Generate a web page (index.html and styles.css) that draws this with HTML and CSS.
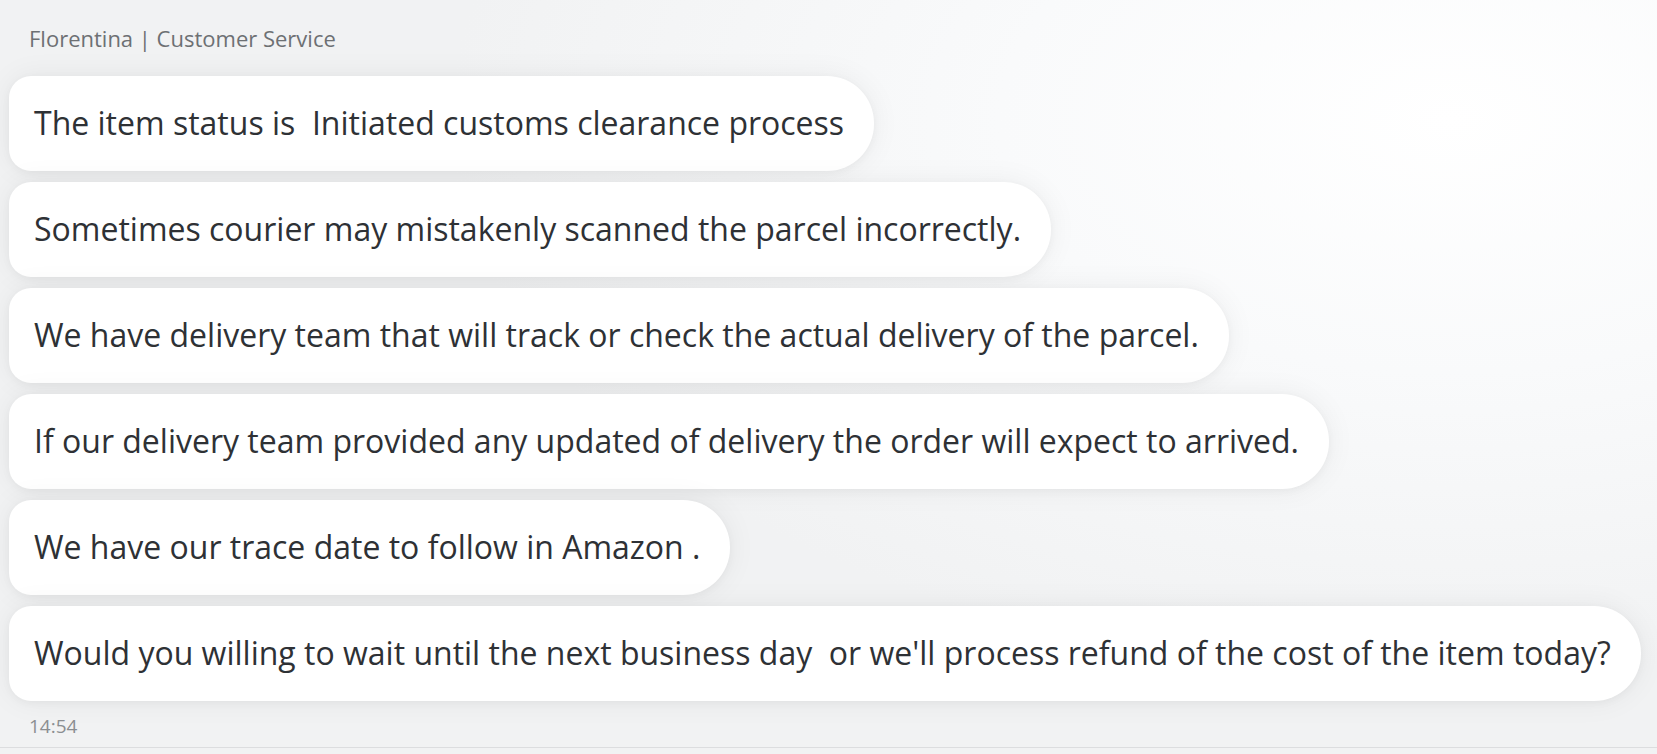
FILE: index.html
```html
<!DOCTYPE html>
<html>
<head>
<meta charset="utf-8">
<link rel="stylesheet" href="styles.css">
</head>
<body>
<div class="chat">
  <div class="sender">Florentina | Customer Service</div>
  <div class="messages">
    <div class="bubble">The item status is&nbsp; Initiated customs clearance process</div>
    <div class="bubble">Sometimes courier may mistakenly scanned the parcel incorrectly.</div>
    <div class="bubble">We have delivery team that will track or check the actual delivery of the parcel.</div>
    <div class="bubble">If our delivery team provided any updated of delivery the order will expect to arrived.</div>
    <div class="bubble">We have our trace date to follow in Amazon .</div>
    <div class="bubble">Would you willing to wait until the next business day&nbsp; or we'll process refund of the cost of the item today?</div>
  </div>
  <div class="time">14:54</div>
</div>
</body>
</html>
```

FILE: styles.css
```css
html, body {
  margin: 0;
  padding: 0;
}
body {
  width: 1657px;
  height: 754px;
  overflow: hidden;
  background: radial-gradient(ellipse 1000px 560px at 1450px 120px, #ffffff 0%, #f9fafb 45%, #f1f2f3 100%);
  font-family: "Open Sans", "Noto Sans", sans-serif;
}
.chat {
  display: flex;
  flex-direction: column;
  align-items: flex-start;
  padding: 25px 0 0 9px;
  height: 748px;
  box-sizing: border-box;
  border-bottom: 1px solid #dcdddf;
}
.sender {
  font-size: 22px;
  color: #6d7073;
  padding-left: 20px;
  line-height: 26px;
  margin-bottom: 25px;
}
.messages {
  display: flex;
  flex-direction: column;
  align-items: flex-start;
  gap: 11px;
}
.bubble {
  background: #ffffff;
  color: #2e3135;
  font-size: 32px;
  line-height: 38px;
  padding: 28px 30px 29px 25px;
  border-radius: 22px 47px 47px 22px;
  box-shadow: 0 2px 8px rgba(0, 0, 0, 0.04), 0 0 30px rgba(0, 0, 0, 0.06);
  white-space: nowrap;
}
.time {
  font-size: 19px;
  color: #8b8e91;
  padding-left: 20px;
  margin-top: 12px;
}
```
